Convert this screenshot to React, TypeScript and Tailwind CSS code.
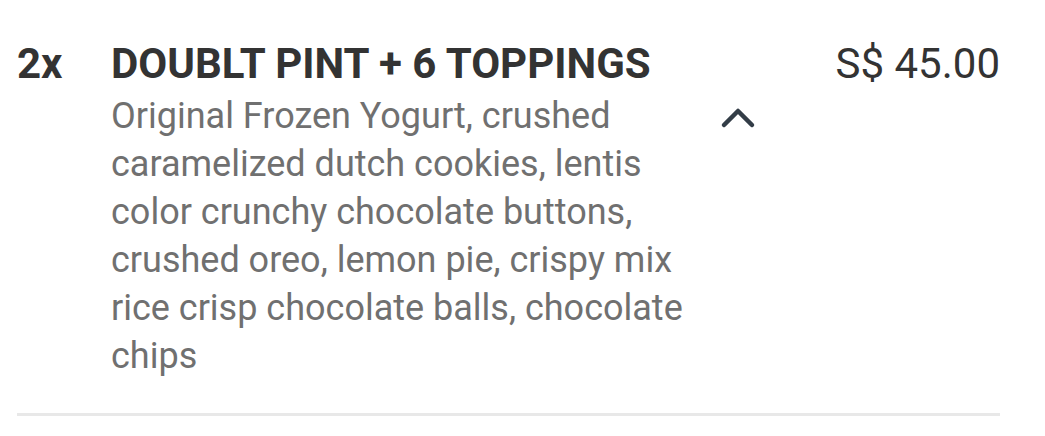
import React from "react";

export default function App() {
  return (
    <div className="w-[1045px] h-[436px] bg-white" style={{ fontFamily: "Roboto, 'Liberation Sans', sans-serif" }}>
      <div className="ml-[17px] w-[983px] pt-[40px] pb-[33px] border-b-[3px] border-[#e8e8e8] flex">
        <div className="w-[94px] shrink-0 text-[42px] leading-[48px] font-bold text-[#333333]">2x</div>
        <div className="flex-1 flex flex-col">
          <div className="text-[42px] leading-[48px] font-bold text-[#333333]">DOUBLT PINT + 6 TOPPINGS</div>
          <div className="flex mt-[4px]">
            <div className="w-[600px] text-[36px] leading-[48px] text-[#707070]">
              Original Frozen Yogurt, crushed caramelized dutch cookies, lentis color crunchy chocolate buttons, crushed oreo, lemon pie, crispy mix rice crisp chocolate balls, chocolate chips
            </div>
            <div className="pt-[13px] pl-[9px]">
              <svg width="36" height="24" viewBox="0 0 36 24" fill="none">
                <polyline points="4,20 18,6 32,20" stroke="#333d47" strokeWidth="4.5" strokeLinecap="round" strokeLinejoin="round" />
              </svg>
            </div>
          </div>
        </div>
        <div className="text-[42px] leading-[48px] text-[#333333] shrink-0">S$ 45.00</div>
      </div>
    </div>
  );
}
